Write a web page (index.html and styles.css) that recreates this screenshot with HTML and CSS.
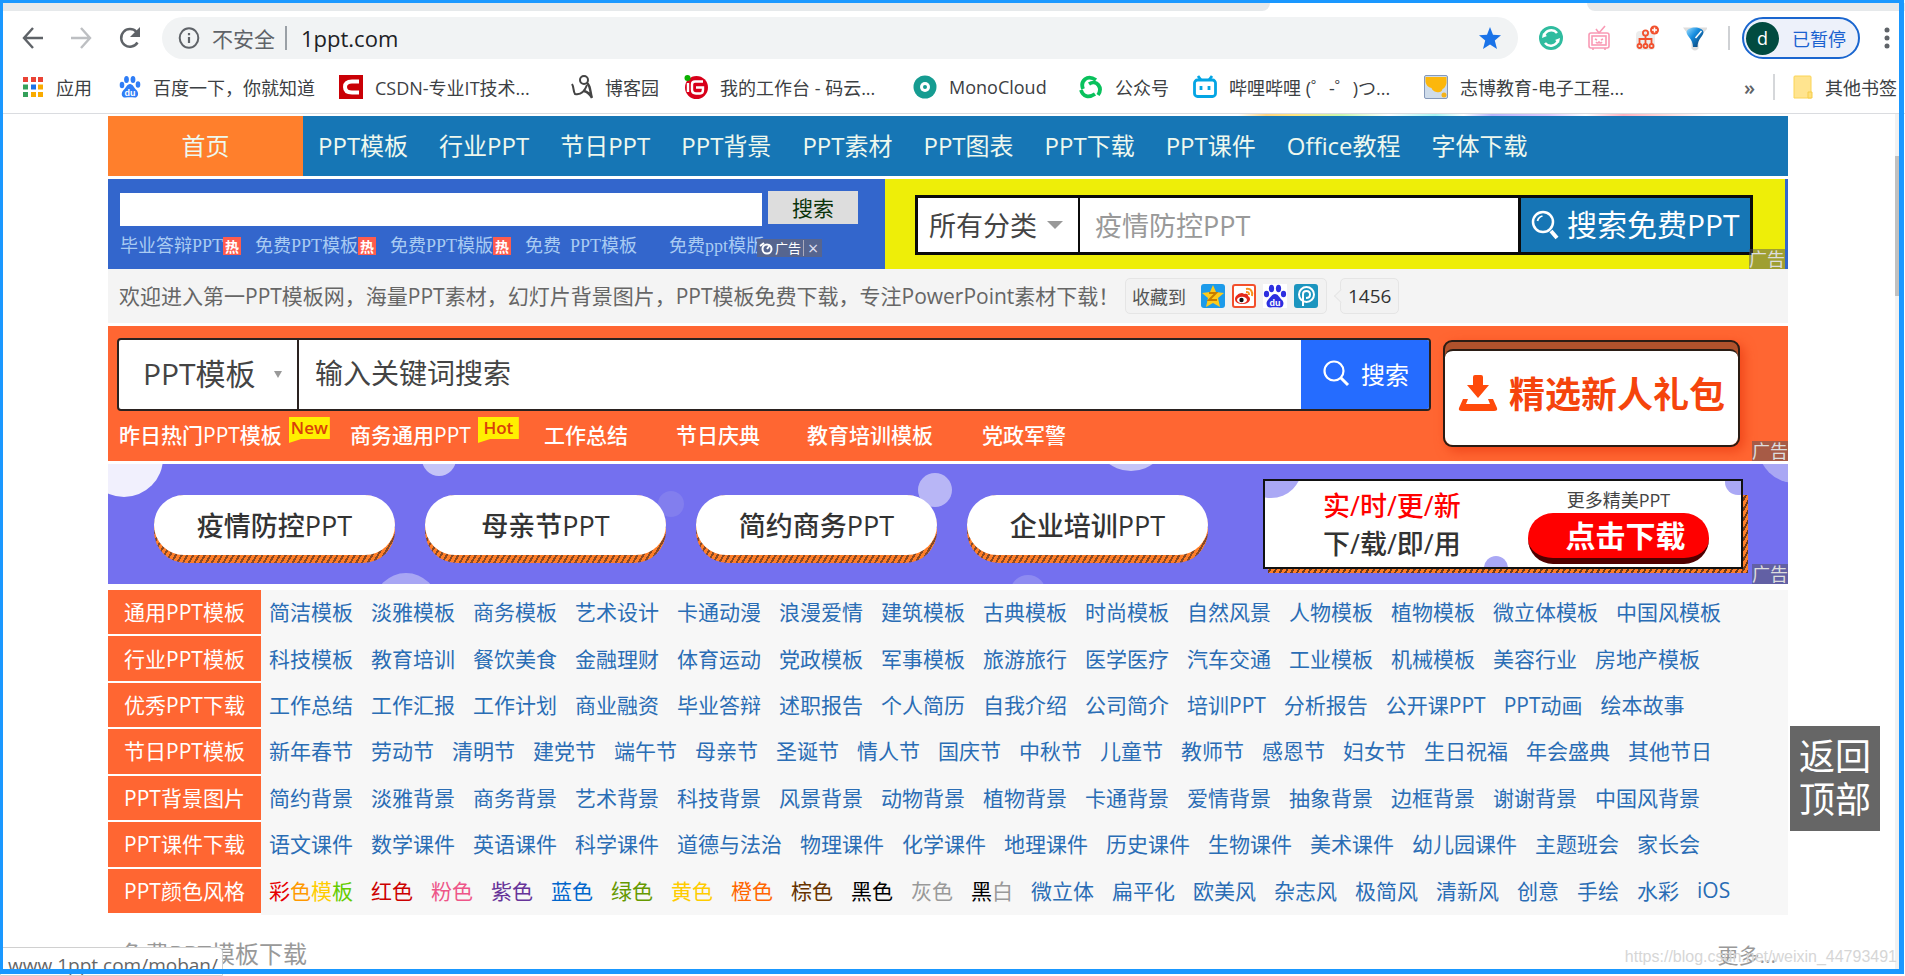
FILE: index.html
```html
<!DOCTYPE html>
<html lang="zh-CN">
<head>
<meta charset="utf-8">
<title>1ppt.com</title>
<link rel="stylesheet" href="styles.css">
</head>
<body>
<div class="window">
  <header class="chrome">
    <div class="tabs"><span class="tab-left"></span><span class="tab-right"></span></div>
    <div class="toolbar">
      <button class="tool" aria-label="后退"><svg width="22" height="24" viewBox="0 0 22 24" fill="none" stroke="#5f6368" stroke-width="2.4"><path d="M21 12H2M11 2L2 12l9 10"/></svg></button>
      <button class="tool" aria-label="前进"><svg width="22" height="24" viewBox="0 0 22 24" fill="none" stroke="#bdbfc2" stroke-width="2.4"><path d="M1 12h19M11 2l9 10-9 10"/></svg></button>
      <button class="tool" aria-label="刷新"><svg width="24" height="24" viewBox="0 0 24 24"><path d="M19.5 16.5A8.8 8.8 0 1 1 18.5 6" fill="none" stroke="#5f6368" stroke-width="2.5"/><path d="M22 1v10H12z" fill="#5f6368"/></svg></button>
      <div class="address">
        <svg width="22" height="24" viewBox="0 0 22 24" fill="none" stroke="#5f6368" stroke-width="2"><ellipse cx="11" cy="12" rx="9.3" ry="9.8"/><path d="M11 11v6M11 7v2.2" stroke-width="2.2"/></svg>
        <span class="insecure">不安全</span><span class="bar"></span>
        <input class="url" aria-label="地址" value="1ppt.com">
        <svg width="24" height="24" viewBox="0 0 24 24"><path d="M12 1l3 7.800 8 .5-6.200 5.200L19 23l-7-4.600L5 23l2.200-8.500L1 9.300l8-.5z" fill="#1a73e8"/></svg>
      </div>
      <div class="extensions">
        <svg width="26" height="26" viewBox="0 0 26 26"><circle cx="13" cy="13" r="12" fill="#2fbc9f"/><path d="M6 11a7.500 7.500 0 0 1 13-3M20 15a7.500 7.500 0 0 1-13 3" fill="none" stroke="#fff" stroke-width="2.6"/><path d="M4 13l5-2-4-3zM22 13l-5 2 4 3z" fill="#fff"/></svg>
        <svg width="24" height="26" viewBox="0 0 24 26" fill="none" stroke="#f99ab5" stroke-width="1.600"><rect x="2" y="8" width="20" height="15" rx="2"/><rect x="5" y="11" width="14" height="9"/><path d="M12 8L9 4M12 8l6-7M8 14l2 1M16 14l-2 1M9 17q1.500 2 3 0 1.500 2 3 0M6 23v2M18 23v2"/></svg>
        <svg width="26" height="26" viewBox="0 0 26 26" fill="none" stroke="#f2502d" stroke-width="1.800"><rect x="2" y="6" width="19" height="19" rx="4" fill="#ececec" stroke="none"/><circle cx="11.500" cy="8" r="2.600"/><path d="M11.500 10v9M5.500 19v-5h12v5"/><circle cx="5.500" cy="21" r="2"/><circle cx="11.500" cy="21" r="2"/><circle cx="17.500" cy="21" r="2"/><circle cx="20.500" cy="5" r="4.500" fill="#f2502d" stroke="none"/><path d="M20.500 2.500v5M18 5h5" stroke="#fff" stroke-width="1.500"/></svg>
        <svg width="24" height="26" viewBox="0 0 24 26"><defs><linearGradient id="drop" x2="1" y2="1"><stop offset="0" stop-color="#9fe0ff"/><stop offset=".4" stop-color="#168de0"/><stop offset="1" stop-color="#07305c"/></linearGradient></defs><path d="M3 4l7 9v10q2 2 4 0V13l8-9z" fill="#eee" stroke="#ddd" stroke-width="3"/><path d="M3.500 7c1-6 16-6 17 0 0 4-6 7-6 15h-4.500c0-8-6.500-11-6.500-15z" fill="url(#drop)"/><path d="M12.500 13l6-7" stroke="#fff" stroke-width="1.500"/></svg>
      </div>
      <span class="bar-light"></span>
      <button class="profile"><span class="avatar">d</span>已暂停</button>
      <button class="tool more-tools" aria-label="菜单"><svg width="6" height="22" viewBox="0 0 6 22" fill="#5f6368"><circle cx="3" cy="3" r="2.500"/><circle cx="3" cy="11" r="2.500"/><circle cx="3" cy="19" r="2.500"/></svg></button>
    </div>
    <nav class="bookmarks" aria-label="书签">
      <a href="#"><svg width="22" height="22" viewBox="0 0 22 22"><path d="M1 1h5v5H1zM9 1h5v5H9zM16 1h5v5h-5z" fill="#ea4335"/><path d="M1 8.500h5v5H1z" fill="#34a05a"/><path d="M9 8.500h5v5H9z" fill="#1a73e8"/><path d="M16 8.500h5v5h-5zM9 16h5v5H9zM16 16h5v5h-5z" fill="#f9ab00"/><path d="M1 16h5v5H1z" fill="#34a05a"/></svg>应用</a>
      <a href="#"><svg width="22" height="24" viewBox="0 0 22 24"><g fill="#2f7df6"><ellipse cx="3" cy="10" rx="2.300" ry="3.200"/><ellipse cx="7.500" cy="4.500" rx="2.400" ry="3.600"/><ellipse cx="14" cy="4.500" rx="2.400" ry="3.600"/><ellipse cx="19" cy="9.500" rx="2.300" ry="3.200"/><path d="M11 9c3 0 4 4 6.500 6 3 3 1.500 8-2 7.600-3-.4-6-.4-9 0C2.500 23 1.500 18 4.500 15 7 13 8 9 11 9z"/></g><text x="11" y="21" class="du">du</text></svg>百度一下，你就知道</a>
      <a href="#"><svg width="24" height="24" viewBox="0 0 24 24"><path d="M0 0h24v24H0z" fill="#ca0006"/><path d="M20 6.500h-7q-7 0-7 5.500t7 5.500h7" fill="none" stroke="#fff" stroke-width="4"/></svg>CSDN-专业IT技术...</a>
      <a href="#"><svg width="22" height="24" viewBox="0 0 22 24" fill="none" stroke="#444"><circle cx="13" cy="5" r="4" stroke-width="2"/><path d="M1 9c2 3 1 7 3 10 5 1 9-1 12-9" stroke-width="2"/><path d="M16 8c4 3 3 10 5 15-2-4-4-6-8-7" stroke-width="2.400"/></svg>博客园</a>
      <a href="#"><svg width="24" height="24" viewBox="0 0 24 24"><circle cx="12.500" cy="12.500" r="11.500" fill="#d8001a"/><path d="M19 6.500h-8q-3 0-3 3v5q0 4 4 4h4q3 0 3-4v-2h-7M4 8v9" fill="none" stroke="#fff" stroke-width="2.400"/><circle cx="3.500" cy="3" r="3" fill="#0bb000"/></svg>我的工作台 - 码云...</a>
      <a href="#"><svg width="24" height="24" viewBox="0 0 24 24"><circle cx="12" cy="12" r="11.500" fill="#159c91"/><circle cx="12" cy="12" r="5" fill="#fff"/><circle cx="12" cy="12" r="2" fill="#159c91"/></svg>MonoCloud</a>
      <a href="#"><svg width="24" height="24" viewBox="0 0 24 24" fill="none" stroke="#09c15c" stroke-width="3.800"><path d="M4 14C1 6 8-1 17 5"/><path d="M2 15c2 7 8 8 14 4"/><path d="M10 9c8-5 14 4 9 11"/></svg>公众号</a>
      <a href="#"><svg width="24" height="24" viewBox="0 0 24 24" fill="none" stroke="#04a5e4" stroke-width="2.800"><rect x="1.500" y="5" width="21" height="16.500" rx="3"/><path d="M8 5L5 1M16 5l3-4M8 11v4M16 11v4"/></svg>哔哩哔哩 (゜-゜)つ...</a>
      <a href="#"><svg width="24" height="24" viewBox="0 0 24 24"><rect x=".5" y=".5" width="23" height="23" rx="1.500" fill="#cfdcea" stroke="#8599ba"/><path d="M1.500 2h21v6q-1 5-4 6-1 4-6 3-4-1-5-4-5-1-6-6z" fill="#fcb70c"/><circle cx="20" cy="20" r="2.500" fill="#f4b21a"/></svg>志博教育-电子工程...</a>
      <button class="overflow" aria-label="更多书签">»</button>
      <a href="#" class="folder"><svg width="20" height="24" viewBox="0 0 20 24"><path d="M1 2q0-1 1-1h15q1 0 1 1v21H1z" fill="#ffe48f" stroke="#fad457"/><path d="M15 23v-6h4v6z" fill="#ffe07b" stroke="#f5cd4c"/></svg>其他书签</a>
    </nav>
  </header>

  <main class="page">
    <div class="rainbow"></div>
    <nav class="mainnav" aria-label="主导航">
      <a href="#" class="home">首页</a>
      <div class="navlinks"><a href="#">PPT模板</a><a href="#">行业PPT</a><a href="#">节日PPT</a><a href="#">PPT背景</a><a href="#">PPT素材</a><a href="#">PPT图表</a><a href="#">PPT下载</a><a href="#">PPT课件</a><a href="#">Office教程</a><a href="#">字体下载</a></div>
    </nav>

    <section class="adrow">
      <div class="bluebox">
        <form class="search-small"><input type="text" aria-label="关键词"><button type="button">搜索</button></form>
        <div class="hotlinks">
          <a href="#">毕业答辩PPT<i>热</i></a><a href="#">免费PPT模板<i>热</i></a><a href="#">免费PPT模版<i>热</i></a><a href="#">免费&nbsp; PPT模板</a><a href="#">免费ppt模版</a>
        </div>
        <div class="adchoice"><svg width="14" height="14" viewBox="0 0 14 14" fill="none" stroke="#fff" stroke-width="2"><circle cx="8" cy="8" r="4.500"/><path d="M1 5l4-3M8 8l3-4"/></svg><span>广告</span><button aria-label="关闭">×</button></div>
      </div>
      <div class="yellowbox">
        <form class="search-yellow">
          <div class="pick"><select aria-label="分类"><option>所有分类</option></select><span class="caret"></span></div>
          <input type="text" aria-label="搜索PPT" placeholder="疫情防控PPT">
          <button type="button"><svg width="28" height="30" viewBox="0 0 28 30" fill="none" stroke="#fff" stroke-width="2.500"><circle cx="12" cy="12" r="10"/><path d="M20 21l6 7" stroke-width="4"/><path d="M6.500 11q1-4 5-5" stroke-width="1.800"/></svg>搜索免费PPT</button>
        </form>
        <span class="adtag">广告</span>
      </div>
    </section>

    <section class="welcome">
      <p>欢迎进入第一PPT模板网，海量PPT素材，幻灯片背景图片，PPT模板免费下载，专注PowerPoint素材下载！</p>
      <div class="share">收藏到
        <span class="share-icons">
        <svg width="24" height="24" viewBox="0 0 24 24"><rect width="24" height="24" rx="3" fill="#1d9bea"/><path d="M12 1l3 7 8 1-6 5 2 9-7-4-7 4 2-9-6-5 8-1z" fill="#fecb1b"/><path d="M8 9h7l-7 7h8" fill="none" stroke="#c77d00" stroke-width="2"/></svg>
        <svg width="24" height="24" viewBox="0 0 24 24"><rect x="1" y="1" width="22" height="22" rx="2" fill="#fff" stroke="#f3502c" stroke-width="2"/><path d="M3 15c0-4 7-8 9-5 4-1 4 1 4 2 4 2 2 8-5 8-4 0-8-1-8-5z" fill="#e52a1c"/><ellipse cx="10" cy="16" rx="5" ry="3.200" fill="#fff"/><circle cx="9.500" cy="16" r="2.200" fill="#111"/><path d="M14 5c5-1 7 3 6 7M14 8c3 0 3 1 3 3" fill="none" stroke="#f7931e" stroke-width="2"/></svg>
        <svg width="24" height="24" viewBox="0 0 24 24"><rect width="24" height="24" fill="#fff"/><g fill="#2d2fe0"><ellipse cx="3.500" cy="10" rx="2.600" ry="3.200"/><ellipse cx="8.500" cy="4.500" rx="2.600" ry="3.800"/><ellipse cx="15.500" cy="4.500" rx="2.600" ry="3.800"/><ellipse cx="20.500" cy="10" rx="2.600" ry="3.200"/><path d="M12 10c3 0 4 3 7 6 3 3 1 8-2.500 7.600-3-.4-6-.4-9 0C4 24 2 19 5 16c3-3 4-6 7-6z"/></g><text x="12" y="22" class="du">du</text></svg>
        <svg width="24" height="24" viewBox="0 0 24 24"><rect width="24" height="24" rx="3" fill="#1c95bf"/><circle cx="12.500" cy="10.500" r="7.500" fill="none" stroke="#fff" stroke-width="2"/><path d="M9 22V10q0-3 3.500-3t3.500 3.500-4 3.500" fill="none" stroke="#fff" stroke-width="2"/></svg>
        </span>
      </div>
      <div class="count">1456</div>
    </section>

    <section class="orange">
      <div class="orange-main">
        <form class="search-orange">
          <div class="pick"><select aria-label="类型"><option>PPT模板</option></select><span class="caret"></span></div>
          <input type="text" aria-label="关键词搜索" placeholder="输入关键词搜索">
          <button type="button"><svg width="28" height="28" viewBox="0 0 28 28" fill="none" stroke="#fff" stroke-width="2.200"><circle cx="12" cy="12" r="9.500"/><path d="M19 19l7 7" stroke-width="3"/></svg>搜索</button>
        </form>
        <div class="orange-links">
          <a href="#">昨日热门PPT模板<b>New</b></a><a href="#">商务通用PPT<b>Hot</b></a><a href="#">工作总结</a><a href="#">节日庆典</a><a href="#">教育培训模板</a><a href="#">党政军警</a>
        </div>
      </div>
      <button class="gift"><span><svg width="40" height="36" viewBox="0 0 40 36" fill="#ff4a0b"><path d="M15 2q0-2 2-2h6q2 0 2 2v8h6L20 23 9 10h6zM1 33l4-9h5l-2 5h24l-2-5h5l4 9q1 3-3 3H4q-4 0-3-3z"/></svg>精选新人礼包</span></button>
      <span class="adtag">广告</span>
    </section>

    <section class="purple">
      <svg class="bubbles" width="100%" height="100%">
        <circle cx="16" cy="-6" r="39" fill="#f1f0fd"/><circle cx="331" cy="-5" r="17" fill="#c5c4f7"/><circle cx="563" cy="40" r="13" fill="#827eee"/><circle cx="298" cy="141" r="32" fill="#a8a6f4"/><circle cx="827" cy="26" r="17" fill="#b8b6f6"/><circle cx="1023" cy="-30" r="37" fill="#c5c4f7"/><circle cx="920" cy="129" r="18" fill="#8e8bf1"/><circle cx="1687" cy="-18" r="37" fill="#a9a7f4"/>
      </svg>
      <div class="pills"><a href="#">疫情防控PPT</a><a href="#">母亲节PPT</a><a href="#">简约商务PPT</a><a href="#">企业培训PPT</a></div>
      <div class="card">
        <svg class="bubbles" width="100%" height="100%"><circle cx="6" cy="-14" r="31" fill="#aaa8f5"/><circle cx="473" cy="1" r="13" fill="#aaa8f5"/><circle cx="231" cy="87" r="12" fill="#aaa8f5"/></svg>
        <div class="slogan"><em>实/时/更/新</em><span>下/载/即/用</span></div>
        <div class="download"><span>更多精美PPT</span><button>点击下载</button></div>
      </div>
      <span class="adtag">广告</span>
    </section>

    <section class="categories">
      <div class="row"><h2>通用PPT模板</h2><div><a href="#">简洁模板</a><a href="#">淡雅模板</a><a href="#">商务模板</a><a href="#">艺术设计</a><a href="#">卡通动漫</a><a href="#">浪漫爱情</a><a href="#">建筑模板</a><a href="#">古典模板</a><a href="#">时尚模板</a><a href="#">自然风景</a><a href="#">人物模板</a><a href="#">植物模板</a><a href="#">微立体模板</a><a href="#">中国风模板</a></div></div>
      <div class="row"><h2>行业PPT模板</h2><div><a href="#">科技模板</a><a href="#">教育培训</a><a href="#">餐饮美食</a><a href="#">金融理财</a><a href="#">体育运动</a><a href="#">党政模板</a><a href="#">军事模板</a><a href="#">旅游旅行</a><a href="#">医学医疗</a><a href="#">汽车交通</a><a href="#">工业模板</a><a href="#">机械模板</a><a href="#">美容行业</a><a href="#">房地产模板</a></div></div>
      <div class="row"><h2>优秀PPT下载</h2><div><a href="#">工作总结</a><a href="#">工作汇报</a><a href="#">工作计划</a><a href="#">商业融资</a><a href="#">毕业答辩</a><a href="#">述职报告</a><a href="#">个人简历</a><a href="#">自我介绍</a><a href="#">公司简介</a><a href="#">培训PPT</a><a href="#">分析报告</a><a href="#">公开课PPT</a><a href="#">PPT动画</a><a href="#">绘本故事</a></div></div>
      <div class="row"><h2>节日PPT模板</h2><div><a href="#">新年春节</a><a href="#">劳动节</a><a href="#">清明节</a><a href="#">建党节</a><a href="#">端午节</a><a href="#">母亲节</a><a href="#">圣诞节</a><a href="#">情人节</a><a href="#">国庆节</a><a href="#">中秋节</a><a href="#">儿童节</a><a href="#">教师节</a><a href="#">感恩节</a><a href="#">妇女节</a><a href="#">生日祝福</a><a href="#">年会盛典</a><a href="#">其他节日</a></div></div>
      <div class="row"><h2>PPT背景图片</h2><div><a href="#">简约背景</a><a href="#">淡雅背景</a><a href="#">商务背景</a><a href="#">艺术背景</a><a href="#">科技背景</a><a href="#">风景背景</a><a href="#">动物背景</a><a href="#">植物背景</a><a href="#">卡通背景</a><a href="#">爱情背景</a><a href="#">抽象背景</a><a href="#">边框背景</a><a href="#">谢谢背景</a><a href="#">中国风背景</a></div></div>
      <div class="row"><h2>PPT课件下载</h2><div><a href="#">语文课件</a><a href="#">数学课件</a><a href="#">英语课件</a><a href="#">科学课件</a><a href="#">道德与法治</a><a href="#">物理课件</a><a href="#">化学课件</a><a href="#">地理课件</a><a href="#">历史课件</a><a href="#">生物课件</a><a href="#">美术课件</a><a href="#">幼儿园课件</a><a href="#">主题班会</a><a href="#">家长会</a></div></div>
      <div class="row"><h2>PPT颜色风格</h2><div><a href="#"><span class="c-bright">彩</span><span class="c-amber">色</span><span class="c-yellow">模</span><span class="c-lime">板</span></a><a href="#" class="c-red">红色</a><a href="#" class="c-pink">粉色</a><a href="#" class="c-purple">紫色</a><a href="#" class="c-blue">蓝色</a><a href="#" class="c-green">绿色</a><a href="#" class="c-yellow">黄色</a><a href="#" class="c-orange">橙色</a><a href="#" class="c-brown">棕色</a><a href="#" class="c-black">黑色</a><a href="#" class="c-gray">灰色</a><a href="#" class="c-gray"><span class="c-black">黑</span>白</a><a href="#">微立体</a><a href="#">扁平化</a><a href="#">欧美风</a><a href="#">杂志风</a><a href="#">极简风</a><a href="#">清新风</a><a href="#">创意</a><a href="#">手绘</a><a href="#">水彩</a><a href="#">iOS</a></div></div>
    </section>

    <section class="heading"><h1>免费PPT模板下载</h1><a href="#">更多...</a></section>
  </main>

  <a href="#" class="totop">返回<br>顶部</a>
  <div class="scroll"><div class="thumb"></div></div>
  <div class="status">www.1ppt.com/moban/</div>
  <div class="watermark">https://blog.csdn.net/weixin_44793491</div>
  <div class="frame"></div>
</div>
</body>
</html>
```
FILE: styles.css
```css
* { box-sizing: border-box; }
body {
  margin: 0;
  font-family: "Open Sans", "Noto Sans CJK SC", sans-serif;
  background: #fff;
}
a { color: inherit; text-decoration: none; white-space: nowrap; }
button, input, select { font-family: inherit; border: 0; padding: 0; margin: 0; background: none; border-radius: 0; outline: 0; }
svg { flex: none; display: block; }
.window { position: relative; height: 100vh; overflow: hidden; display: flex; flex-direction: column; }
.frame { position: absolute; inset: 0 1px 2px 0; border: 3px solid #1a98ff; border-right-width: 5px; border-bottom-width: 5px; pointer-events: none; }
.du { font: bold 9px "Liberation Sans", sans-serif; fill: #fff; text-anchor: middle; }

/* browser chrome */
.chrome { padding-top: 3px; border-bottom: 1px solid #dadce0; }
.tabs { display: flex; justify-content: space-between; height: 8px; }
.tabs span { background: #e6e9eb; }
.tab-left { flex: 0 0 1270px; border-bottom-right-radius: 8px; }
.tab-right { flex: 0 0 318px; border-bottom-left-radius: 8px; }
.toolbar { display: flex; align-items: center; height: 54px; padding-left: 22px; }
.tool { display: flex; margin-right: 26px; }
.tool:nth-child(3) { margin-right: 20px; }
.address { flex: 1; display: flex; align-items: center; height: 42px; border-radius: 21px; background: #f1f3f4; padding: 0 16px 0 16px; }
.insecure { font-size: 21px; color: #5f6368; margin-left: 12px; }
.bar { width: 2px; height: 24px; margin: 0 14px 0 10px; background: #9aa0a6; }
.url { flex: 1; font-size: 22px; color: #202124; }
.extensions { display: flex; gap: 23px; margin-left: 20px; }
.bar-light { width: 2px; height: 24px; background: #cfd1d4; margin: 0 12px 0 21px; }
.profile { display: flex; align-items: center; gap: 13px; width: 118px; height: 42px; border: 2px solid #1a66cf; border-radius: 21px; background: #edf1fa; color: #1a62d0; font-size: 18px; padding-left: 2px; white-space: nowrap; }
.avatar { width: 33px; height: 33px; line-height: 32px; border-radius: 50%; background: #014b40; color: #fff; text-align: center; }
.more-tools { margin: 0 15px 0 24px; }
.bookmarks { display: grid; grid-template-columns: 97px 220px 232px 113px 229px 166px 114px 231px 1fr 28px 133px; align-items: center; height: 48px; padding: 0 0 4px 22px; overflow: hidden; font-size: 18px; color: #3c4043; }
.bookmarks a { display: flex; align-items: center; gap: 12px; }
.overflow { font-size: 20px; font-weight: 600; color: #5f6368; text-align: left; }
.bookmarks .folder { margin-left: 1px; border-left: 2px solid #d5d7da; padding-left: 18px; }

/* site */
.page { flex: 1; min-height: 0; overflow: hidden; padding: 0 117px 0 108px; }
.page > * { margin-bottom: 3px; }
.page > .rainbow { height: 2px; margin: 0 80px 0 1130px; background: linear-gradient(90deg, #fff, #ffd580, #ffe680 12%, #c9f7b0 22%, #fff 32%, #a8f5f2 42%, #fff 48%, #b9b5fa 54%, #dfc9fa 66%, #fff 74%, #ffb3c0 82%, #ffd6d6 90%, #fff); }
.mainnav { display: flex; height: 60px; line-height: 60px; background: #1676b5; color: #eef8ee; font-size: 24px; }
.home { width: 195px; text-align: center; background: #ff7f2c; }
.navlinks { display: flex; gap: 31px; padding-left: 15px; }
.page > .adrow { display: flex; height: 90px; margin-bottom: 0; }
.bluebox { position: relative; flex: 0 0 777px; background: #36c; padding: 12px 27px 0 12px; }
.search-small { display: flex; gap: 6px; }
.search-small input { flex: 1; height: 33px; margin-top: 2px; background: #fff; }
.search-small button { width: 90px; height: 33px; background: #ddd; color: #0a330a; font-size: 21px; line-height: 30px; }
.hotlinks { display: grid; grid-template-columns: 135px 135px 135px 144px auto; margin-top: 8px; color: #a9cbf2; font: 18px/24px "Liberation Serif", "Noto Sans CJK SC", serif; }
.hotlinks a { display: flex; align-items: center; }
.hotlinks i { font: bold 14px/18px "Noto Sans CJK SC", sans-serif; width: 18px; height: 18px; text-align: center; color: #fff; background: #ff5c4d; }
.adchoice { position: absolute; left: 649px; bottom: 12px; display: flex; align-items: center; gap: 2px; height: 18px; padding: 0 4px 0 2px; background: #56658f; color: #fff; font-size: 13px; line-height: 18px; }
.adchoice button { border-left: 1px solid #aab; color: #dde; font-size: 18px; line-height: 16px; padding-left: 4px; }
.yellowbox { position: relative; flex: 1; background: #eeee08; border-right: 3px solid #36c; padding: 16px 32px 0 30px; }
.search-yellow { display: flex; height: 60px; border: 3px solid #0b0b0b; background: #fff; }
.pick { display: flex; align-items: center; justify-content: space-between; }
.pick select { appearance: none; flex: 1; color: #444; }
.caret { border: 8px solid transparent; border-top-color: #999; border-bottom: 0; }
.search-yellow .pick { width: 162px; border-right: 2px solid #0b0b0b; padding: 0 15px 0 11px; }
.search-yellow select, .search-yellow input { font-size: 27px; }
.search-yellow input { flex: 1; min-width: 0; padding-left: 15px; }
.search-yellow input::placeholder { color: #999; }
.search-yellow button { display: flex; align-items: center; gap: 8px; width: 232px; padding-left: 10px; border-left: 3px solid #0b0b0b; background: #1676b5; color: #fff; font-size: 30px; line-height: 42px; white-space: nowrap; }
.adtag { position: absolute; right: 0; bottom: 0; height: 20px; line-height: 20px; font-size: 18px; color: #ddd; background: rgba(80, 80, 90, .5); }
.welcome { display: flex; align-items: center; height: 54px; padding-left: 11px; background: #f4f4f4; color: #666; font-size: 21px; }
.welcome p { margin: 0; padding-bottom: 2px; white-space: nowrap; flex: 0 0 1006px; }
.share, .count { display: flex; align-items: center; height: 36px; border: 1px solid #e5e5e5; border-radius: 5px; background: #f2f2f2; }
.share { width: 202px; padding: 0 8px 0 6px; justify-content: space-between; font-size: 18px; white-space: nowrap; color: #555; }
.share-icons { display: flex; gap: 7px; }
.count { position: relative; margin-left: 13px; padding: 0 7px; font-size: 19px; color: #333; }
.count::before { content: ""; position: absolute; left: -5px; top: 12px; width: 9px; height: 9px; background: #f2f2f2; border: solid #e5e5e5; border-width: 0 0 1px 1px; transform: rotate(45deg); }
.orange { position: relative; display: flex; height: 135px; padding: 12px 48px 0 9px; background: #ff6632; }
.orange-main { flex: 1; }
.search-orange { display: flex; height: 73px; border: 2px solid #2a2220; border-radius: 4px; background: #fff; overflow: hidden; }
.search-orange .pick { width: 180px; border-right: 2px solid #2a2220; padding: 0 15px 0 24px; }
.search-orange .caret { border-width: 7px 4px 0; }
.search-orange select { font-size: 30px; padding-bottom: 3px; }
.search-orange input { font-size: 28px; flex: 1; padding: 0 0 3px 16px; }
.search-orange input::placeholder { color: #444; }
.search-orange button { display: flex; align-items: center; gap: 11px; width: 128px; padding: 0 0 3px 21px; background: #256cff; color: #fff; font-size: 24px; }
.orange-links { display: grid; grid-template-columns: 231px 194px 132px 131px 175px auto; padding: 6px 0 0 2px; color: #fff; font-size: 21px; line-height: 36px; }
.orange-links a { display: flex; align-items: flex-start; gap: 7px; font-weight: 500; }
.orange-links b { width: 41px; height: 26px; text-align: center; font-weight: 600; font-size: 17px; line-height: 21px; color: #d9400a; background: #fff000; clip-path: polygon(0 0, 100% 0, 100% 85%, 30% 85%, 0 100%); }
.gift { width: 297px; height: 107px; margin: 2px 0 0 12px; padding-top: 7px; border: 2px solid #2a1c14; border-radius: 9px; background: #b0522c; box-shadow: 4px 4px 12px #f0461a; }
.gift span { display: flex; align-items: center; justify-content: center; gap: 11px; height: 96px; padding-bottom: 11px; border-top: 2px solid #2a1c14; border-radius: 8px; background: #fff; color: #f5440c; font-size: 36px; font-weight: 700; white-space: nowrap; }
.page > .purple { position: relative; z-index: 0; display: flex; justify-content: space-between; height: 120px; margin-bottom: 6px; padding: 15px 45px 0 46px; background: #7470ef; overflow: hidden; }
.bubbles { position: absolute; left: 0; top: 0; }
.pills { position: relative; display: flex; gap: 30px; margin-top: 16px; height: 68px; }
.pills a { position: relative; width: 241px; height: 68px; border-radius: 32px; text-align: center; font-size: 27px; line-height: 61px; font-weight: 500; color: #333; background: repeating-linear-gradient(120deg, #ff7d26 0 3px, #8a4a24 3px 5px); isolation: isolate; }
.pills a::before { content: ""; position: absolute; inset: 0 0 8px; border-radius: 30px; background: #fff; z-index: -1; }
.card { position: relative; display: flex; width: 480px; height: 90px; border: 2px solid #111; background: #fff; }
.card::before { content: ""; position: absolute; z-index: -1; inset: 14px -7px -6px 3px; background: repeating-linear-gradient(120deg, #ff7d26 0 3px, #6b3a1c 3px 5px); }
.slogan { position: relative; display: flex; flex-direction: column; padding: 6px 0 0 58px; width: 263px; font-size: 27px; line-height: 38px; font-weight: 500; color: #333; }
.slogan em { font-style: normal; color: #f00; }
.download { position: relative; display: flex; flex-direction: column; align-items: center; width: 181px; padding-top: 6px; color: #444; }
.download span { font-size: 18px; line-height: 26px; }
.download button { width: 181px; height: 51px; border-bottom: 6px solid #500000; border-radius: 25px; background: #f00; color: #fff; font-size: 30px; line-height: 42px; font-weight: 700; padding-left: 14px; }
.categories { display: grid; grid-auto-rows: 1fr; gap: 2px; min-height: 325px; padding-bottom: 2px; background: #f7f7f7; font-size: 21px; color: #2a6db5; }
.row { display: flex; align-items: stretch; }
.row h2 { margin: 0; padding-bottom: 2px; width: 153px; display: flex; align-items: center; justify-content: center; background: #ff6632; color: #fff; font-size: 21px; font-weight: 400; box-shadow: 0 2px #fff; white-space: nowrap; }
.row div { display: flex; align-items: center; gap: 18px; padding: 0 0 2px 8px; }
.c-bright { color: #e60000; } .c-amber { color: #ff9900; } .c-yellow { color: #ffcc00; } .c-lime { color: #66cc00; }
.c-red { color: #cc0000; } .c-pink { color: #ee5588; } .c-purple { color: #663399; } .c-blue { color: #0066cc; }
.c-green { color: #669900; } .c-orange { color: #ff6600; } .c-brown { color: #663300; } .c-black { color: #000; } .c-gray { color: #999; }
.heading { display: flex; justify-content: space-between; align-items: center; padding: 18px 12px 0 13px; color: #999; font-size: 21px; }
.heading h1 { margin: 0; font-size: 24px; line-height: 36px; font-weight: 400; }

/* overlays */
.totop { position: absolute; right: 25px; top: 726px; width: 90px; padding: 9px 0 10px; text-align: center; font-size: 36px; line-height: 43px; color: #fff; background: #666; }
.scroll { position: absolute; right: 6px; top: 114px; bottom: 7px; width: 4px; padding-top: 42px; background: #f1f1f1; }
.thumb { height: 140px; background: #c1c1c1; }
.status { position: absolute; left: 0; bottom: 0; width: 223px; height: 29px; padding-left: 7px; border: 1px solid #d0d0d0; border-radius: 0 5px 0 0; background: #fff; color: #666; font-size: 19px; line-height: 34px; white-space: nowrap; overflow: hidden; }
.watermark { position: absolute; right: 8px; bottom: 9px; font: 16px/20px "Liberation Sans", sans-serif; color: #d6d6d6; }
```
